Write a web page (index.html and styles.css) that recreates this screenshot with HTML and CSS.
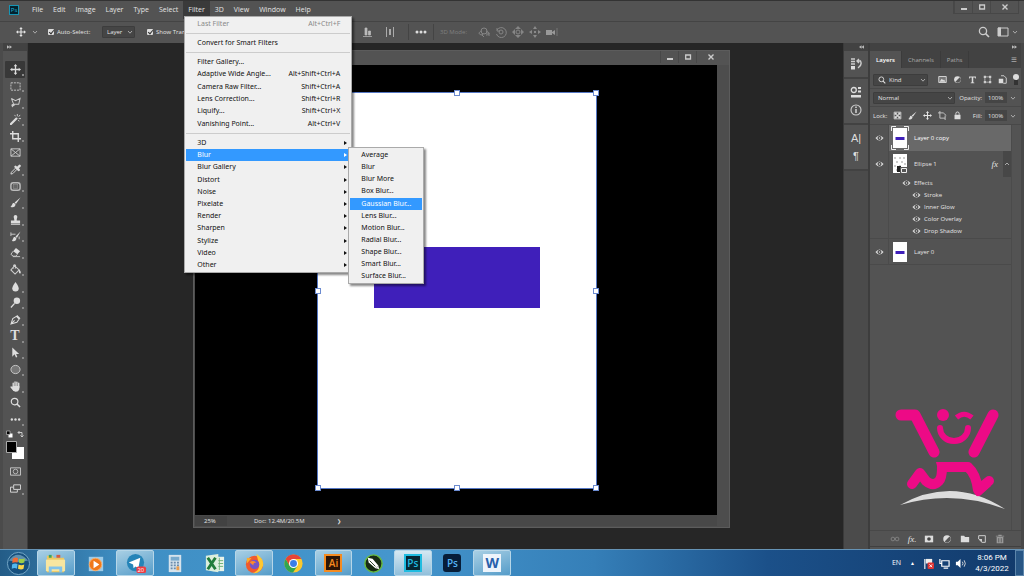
FILE: index.html
```html
<!DOCTYPE html>
<html lang="en">
<head>
<meta charset="utf-8">
<title>Photoshop</title>
<link rel="stylesheet" href="styles.css">
</head>
<body>
<svg class="defs" aria-hidden="true">
  <defs>
    <symbol id="move" viewBox="0 0 12 12"><path d="M6 0 8 2.500H6.700V5.300H9.500V4L12 6 9.500 8V6.700H6.700V9.500H8L6 12 4 9.500H5.300V6.700H2.500V8L0 6 2.500 4V5.300H5.300V2.500H4z" fill="currentColor"/></symbol>
    <symbol id="chev" viewBox="0 0 6 6"><path d="M1 2 3 4.200 5 2" fill="none" stroke="currentColor"/></symbol>
    <symbol id="eye" viewBox="0 0 10 8"><path d="M0.500 4Q5-1.800 9.500 4 5 9.800.5 4z" fill="#ddd"/><circle cx="5" cy="4" r="2.200" fill="#444"/><circle cx="5" cy="4" r=".9" fill="#ddd"/></symbol>
    <symbol id="search" viewBox="0 0 12 12"><circle cx="5" cy="5" r="3.600" fill="none" stroke="currentColor" stroke-width="1.300"/><path d="m7.600 7.600 3.400 3.400" stroke="currentColor" stroke-width="1.600"/></symbol>
    <symbol id="half" viewBox="0 0 12 12"><circle cx="6" cy="6" r="4.500" fill="currentColor"/><path d="M9 3 3.200 9A4.200 4.200 0 0 0 9 9 4.200 4.200 0 0 0 9 3z" fill="#555"/></symbol>
    <symbol id="dbl" viewBox="0 0 6 4"><path d="M0 0 3 2 0 4zM3 0 6 2 3 4z" fill="currentColor"/></symbol>
    <symbol id="dbll" viewBox="0 0 6 4"><path d="M6 0 3 2 6 4zM3 0 0 2 3 4z" fill="currentColor"/></symbol>
    <symbol id="min" viewBox="0 0 8 8"><path d="M1 5h6v2H1z" fill="currentColor"/></symbol>
    <symbol id="max" viewBox="0 0 8 8"><path d="M1.700 2h4.800v4H1.700z" fill="none" stroke="currentColor" stroke-width="1.300"/></symbol>
    <symbol id="close" viewBox="0 0 8 8"><path d="m1.500 1.500 5 5m0-5-5 5" stroke="currentColor" stroke-width="1.400"/></symbol>
  </defs>
</svg>

<header class="menubar">
  <span class="pslogo">Ps</span>
  <nav class="menus">
    <button>File</button><button>Edit</button><button>Image</button><button>Layer</button><button>Type</button><button>Select</button>
    <div class="menuhost">
      <button class="open">Filter</button>
      <div class="dropdown">
        <button class="item dim"><span>Last Filter</span><kbd>Alt+Ctrl+F</kbd></button>
        <hr>
        <button class="item"><span>Convert for Smart Filters</span></button>
        <hr>
        <div class="group six">
          <button class="item"><span>Filter Gallery...</span></button>
          <button class="item"><span>Adaptive Wide Angle...</span><kbd>Alt+Shift+Ctrl+A</kbd></button>
          <button class="item"><span>Camera Raw Filter...</span><kbd>Shift+Ctrl+A</kbd></button>
          <button class="item"><span>Lens Correction...</span><kbd>Shift+Ctrl+R</kbd></button>
          <button class="item"><span>Liquify...</span><kbd>Shift+Ctrl+X</kbd></button>
          <button class="item"><span>Vanishing Point...</span><kbd>Alt+Ctrl+V</kbd></button>
        </div>
        <hr>
        <div class="group eleven">
          <button class="item sub"><span>3D</span></button>
          <div class="subhost">
            <button class="item sub on"><span>Blur</span></button>
            <div class="submenu">
              <button class="item">Average</button>
              <button class="item">Blur</button>
              <button class="item">Blur More</button>
              <button class="item">Box Blur...</button>
              <button class="item on">Gaussian Blur...</button>
              <button class="item">Lens Blur...</button>
              <button class="item">Motion Blur...</button>
              <button class="item">Radial Blur...</button>
              <button class="item">Shape Blur...</button>
              <button class="item">Smart Blur...</button>
              <button class="item">Surface Blur...</button>
            </div>
          </div>
          <button class="item sub"><span>Blur Gallery</span></button>
          <button class="item sub"><span>Distort</span></button>
          <button class="item sub"><span>Noise</span></button>
          <button class="item sub"><span>Pixelate</span></button>
          <button class="item sub"><span>Render</span></button>
          <button class="item sub"><span>Sharpen</span></button>
          <button class="item sub"><span>Stylize</span></button>
          <button class="item sub"><span>Video</span></button>
          <button class="item sub"><span>Other</span></button>
        </div>
      </div>
    </div>
    <button>3D</button><button>View</button><button>Window</button><button>Help</button>
  </nav>
  <div class="winctl">
    <button aria-label="Minimize"><svg><use href="#min"/></svg></button><button aria-label="Maximize"><svg><use href="#max"/></svg></button><button class="wide" aria-label="Close"><svg><use href="#close"/></svg></button>
  </div>
</header>

<div class="options">
  <svg class="i10"><use href="#move"/></svg>
  <svg class="i6"><use href="#chev"/></svg>
  <label class="check auto"><input type="checkbox" checked>Auto-Select:</label>
  <span class="pick layerpick"><select aria-label="Auto-select target"><option>Layer</option></select><svg class="i6"><use href="#chev"/></svg></span>
  <label class="check trans"><input type="checkbox" checked>Show Transform Controls</label>
  <div class="align">
    <svg class="i10" viewBox="0 0 10 10"><path d="M0 9.500h9M2 1h2v7H2zM5.500 4h2v4h-2z" fill="#bbb" stroke="#bbb" stroke-width=".7"/></svg>
    <svg class="i10" viewBox="0 0 10 10"><path d="M1.500 0v10M8.500 0v10" stroke="#aaa"/><path d="M4 2h2v6H4z" fill="#aaa"/></svg>
    <i class="vline"></i>
    <svg class="i12" viewBox="0 0 12 12"><g fill="#ddd"><circle cx="2" cy="6" r="1.500"/><circle cx="6" cy="6" r="1.500"/><circle cx="10" cy="6" r="1.500"/></g></svg>
    <i class="vline"></i>
    <span class="mode">3D Mode:</span>
    <svg class="i12" viewBox="0 0 12 12" fill="none" stroke="#858585"><circle cx="6" cy="5" r="3"/><path d="M4 5C0 6 0 9 5 9M8 5c4 1 4 4 0 4M5 7l-1 2 2 2M8 7h3v3"/></svg>
    <svg class="i12" viewBox="0 0 12 12" fill="none" stroke="#858585"><circle cx="6" cy="6" r="2"/><path d="M2 2v3h3M2 4a5 5 0 1 1-.5 4"/></svg>
    <svg class="i12" viewBox="0 0 12 12"><path d="M6 0 9 3H3zM6 12 3 9h6zM0 6l3-3v6zM12 6 9 9V3z" fill="#858585"/><circle cx="6" cy="6" r="2" fill="none" stroke="#858585"/></svg>
    <svg class="i12" viewBox="0 0 12 12"><path d="M6 0 8 3H4zM6 12 4 9h4zM0 6l3-2v4zM12 6 9 8V4zM5 5h2v2H5z" fill="#8a8a8a"/></svg>
    <svg class="i12" viewBox="0 0 12 12"><path d="M0 4h6v5H0zM6 6l3-2v5L6 7z" fill="#999"/><path d="M11 2v8" stroke="#777"/></svg>
  </div>
  <div class="right">
    <button aria-label="Search"><svg class="i12"><use href="#search"/></svg></button>
    <button aria-label="Workspace"><svg class="i12" viewBox="0 0 12 12"><path d="M1 2h10v8H1z" fill="none" stroke="#ccc"/><path d="M1 1.500h3V10H1z" fill="#ccc"/></svg></button>
    <svg class="i6"><use href="#chev"/></svg>
  </div>
</div>

<main class="work">
  <aside class="tools">
    <div class="strip"><svg class="arrows"><use href="#dbl"/></svg></div>
    <div class="toollist">
      <button class="on fly" aria-label="Move"><svg><use href="#move"/></svg></button>
      <button class="fly" aria-label="Marquee"><svg viewBox="0 0 12 12"><path d="M1 2h10v8H1z" fill="none" stroke="#ccc" stroke-dasharray="2.200 1"/></svg></button>
      <button class="fly" aria-label="Lasso"><svg viewBox="0 0 12 12"><path d="M1.500 1.500 6 4l5-2.500L9.500 8H4L1.500 1.500M4 8c-3 0-2 3 0 1.500S3 7 2.500 11" fill="none" stroke="#ccc" stroke-width="1.100"/></svg></button>
      <button class="fly" aria-label="Magic wand"><svg viewBox="0 0 12 12"><path d="m1 11 6-6" stroke="#ddd" stroke-width="2.400" stroke-linecap="round"/><path d="M8 0v2.500M5 1l1 1.500M11 1 9.500 3M12 5H9.500M10 8 9 6.500" stroke="#ccc"/></svg></button>
      <button class="fly" aria-label="Crop"><svg viewBox="0 0 12 12"><path d="M3 0v8.500h9M0 3h9v9" fill="none" stroke="#ddd" stroke-width="1.500"/></svg></button>
      <button aria-label="Frame"><svg viewBox="0 0 12 12"><path d="M1 2h10v8H1zM1 2l10 8M11 2 1 10" fill="none" stroke="#ccc"/></svg></button>
      <button class="fly" aria-label="Eyedropper"><svg viewBox="0 0 12 12"><path d="m6.500 4-5 5-.5 2 2-.5 5-5" fill="none" stroke="#ddd"/><path d="m6 3 3.500 3.500M8 4.500l2.500-2.500" stroke="#ddd" stroke-width="2.600" stroke-linecap="round"/></svg></button>
      <button class="fly" aria-label="Healing patch"><svg viewBox="0 0 12 12"><rect x="1" y="2" width="10" height="8" rx="2.500" fill="none" stroke="#bbb" stroke-width="1.600"/><rect x="3.500" y="4" width="5" height="4" fill="#666" stroke="#999" stroke-width=".6"/></svg></button>
      <button class="fly" aria-label="Brush"><svg viewBox="0 0 12 12"><path d="M11.500.5 5 6l1.500 1.500zM4.500 6.500C2 6 3 9 .5 10.500 3 12 6 11 6 8z" fill="#ddd"/></svg></button>
      <button class="fly" aria-label="Stamp"><svg viewBox="0 0 12 12"><path d="M4 3a2 2 0 1 1 4 0c0 1-.7 2-.7 4H11v3H1V7h3.700C4.700 5 4 4 4 3zM1 10.700h10v1H1z" fill="#ddd"/></svg></button>
      <button class="fly" aria-label="History brush"><svg viewBox="0 0 12 12"><path d="M11.500.5 6 6l1.500 1.500zM5.500 6.500C3 6 4 9 2 10.500 4 12 7 11 7 8z" fill="#ddd"/><path d="M1 3.500h5M1 1.500v4M10 6v3" stroke="#ccc"/></svg></button>
      <button class="fly" aria-label="Eraser"><svg viewBox="0 0 12 12"><path d="m6.500 1 4.500 3.500L8 8 3.500 4.500z" fill="#ddd"/><path d="M3.500 4.500 1 8l2.500 2h3L8 8M3 10.500h8" fill="none" stroke="#ccc"/></svg></button>
      <button class="fly" aria-label="Paint bucket"><svg viewBox="0 0 12 12"><path d="m5 2 5 4.500L5.500 11 1 6.500zM4 5V1.500q1-1.500 2 0V5" fill="none" stroke="#ccc" stroke-width="1.200"/><path d="M10 6q3 3 1 4.500Q9 10 10 6" fill="#ddd"/></svg></button>
      <button class="fly" aria-label="Blur"><svg viewBox="0 0 12 12"><path d="M6 1Q9.500 5.500 9.500 8a3.500 3.500 0 0 1-7 0Q2.500 5.500 6 1" fill="#ddd"/></svg></button>
      <button class="fly" aria-label="Dodge"><svg viewBox="0 0 12 12"><circle cx="7.500" cy="4" r="3.500" fill="#ddd"/><path d="m5 7-4 4.500" stroke="#ddd" stroke-width="1.400"/></svg></button>
      <button class="fly" aria-label="Pen"><svg viewBox="0 0 12 12"><path d="M1 11 3 5l4-2.500 3 3L7.500 9zM1 11l4-4M7.500 1.500 11 5" fill="none" stroke="#ddd" stroke-width="1.100"/></svg></button>
      <button class="fly glyph" aria-label="Type">T</button>
      <button class="fly" aria-label="Path select"><svg viewBox="0 0 12 12"><path d="M2.500.5v10L5 8l1.500 3.500L8 11 6.700 7.500H10z" fill="#ddd"/></svg></button>
      <button class="fly" aria-label="Ellipse"><svg viewBox="0 0 12 12"><ellipse cx="6" cy="6" rx="5" ry="4.500" fill="#777" stroke="#ccc"/></svg></button>
      <button class="fly" aria-label="Hand"><svg viewBox="0 0 12 12"><path d="M3.500 7V2.500M5.500 6V1M7.500 6V1.200M9.500 7V2.500M1.200 6.500 4 10" stroke="#ddd" stroke-width="1.500" stroke-linecap="round"/><path d="M3 5.500h7.200V9Q9 12 6 11.700 3.500 11.500 2 8z" fill="#ddd"/></svg></button>
      <button aria-label="Zoom"><svg><use href="#search"/></svg></button>
      <button class="fly" aria-label="More tools"><svg viewBox="0 0 12 12"><g fill="#ddd"><circle cx="2" cy="6" r="1.300"/><circle cx="6" cy="6" r="1.300"/><circle cx="10" cy="6" r="1.300"/></g></svg></button>
    </div>
    <div class="swatches">
      <svg viewBox="0 0 20 30"><path d="M3.500 3.500h4v4h-4z" fill="#fff"/><path d="M1.500 1h3.500v3.500H1.500z" fill="#000" stroke="#bbb" stroke-width=".7"/><path d="M13 2.500h4V7M14.500 1 13 2.500l1.500 1.500M15.500 5.500 17 7l1.500-1.500" fill="none" stroke="#ccc"/><path d="M7 17h12v12H7z" fill="#fff"/><path d="M1.500 11.500h10v11h-10z" fill="#000" stroke="#aaa"/></svg>
    </div>
    <button aria-label="Quick mask"><svg viewBox="0 0 12 12"><path d="M.5 2h11v8H.5z" fill="none" stroke="#ccc"/><circle cx="6" cy="6" r="2.500" fill="none" stroke="#bbb"/></svg></button>
    <button class="fly" aria-label="Screen mode"><svg viewBox="0 0 12 12"><path d="M4 2h7.500v5H4z" fill="#535353" stroke="#ddd"/><path d="M3.500 4.500h-3V10H8V7.500" fill="none" stroke="#ddd"/></svg></button>
  </aside>

  <section class="desk">
    <div class="docwin">
      <div class="doctitle">
        <button aria-label="Minimize document"><svg><use href="#min"/></svg></button><button aria-label="Maximize document"><svg><use href="#max"/></svg></button><button class="wide" aria-label="Close document"><svg><use href="#close"/></svg></button>
      </div>
      <div class="docbody">
        <div class="page">
          <div class="rect"></div>
          <i class="h nw"></i><i class="h n"></i><i class="h ne"></i><i class="h w"></i><i class="h e"></i><i class="h sw"></i><i class="h s"></i><i class="h se"></i>
        </div>
      </div>
      <div class="docstatus"><span class="pct">25%</span><span class="size">Doc: 12.4M/20.5M</span><span class="gt">❯</span></div>
    </div>
  </section>

  <aside class="icons">
    <div class="strip"><svg class="arrows"><use href="#dbll"/></svg></div>
    <div class="set"><button aria-label="History"><svg viewBox="0 0 12 12"><path d="M1 1h4M1 3.500h4M1 6h4" stroke="#ccc" stroke-width="1.300"/><path d="M1 8h4v3.500H1z" fill="#ddd"/><path d="M7.500 3h3q2 4-2.500 7M9 1 7 3l2 2" fill="none" stroke="#ccc" stroke-width="1.400"/></svg></button></div>
    <div class="set"><button aria-label="Properties"><svg viewBox="0 0 12 12"><path d="M1 9h10v2.500H1zM8 1h3v2H8zM8 4.500h3v2H8z" fill="#ddd"/><circle cx="3.800" cy="4" r="2.500" fill="none" stroke="#ddd" stroke-width="1.300"/></svg></button><button aria-label="Info"><svg viewBox="0 0 12 12"><circle cx="6" cy="6" r="5" fill="none" stroke="#ccc" stroke-width="1.100"/><path d="M6 2.500V4M6 5v4" stroke="#ddd" stroke-width="1.400"/></svg></button></div>
    <div class="set"><button class="glyph2" aria-label="Character">A|</button><button class="glyph2" aria-label="Paragraph">¶</button></div>
  </aside>

  <aside class="panel">
    <div class="strip"><svg class="arrows"><use href="#dbl"/></svg></div>
    <div class="tabs"><button class="on">Layers</button><button>Channels</button><button>Paths</button><span class="burger">≡</span></div>
    <div class="prow">
      <span class="pick kind"><svg class="i8"><use href="#search"/></svg><select aria-label="Filter kind"><option>Kind</option></select><svg class="i6"><use href="#chev"/></svg></span>
      <div class="filters">
        <svg viewBox="0 0 12 12"><path d="M1 2h10v8H1z" fill="#777" stroke="#ddd" stroke-width="1.200"/><path d="m2 9 3-4 2 2 1-1 2 3z" fill="#ddd"/></svg>
        <svg><use href="#half"/></svg>
        <svg viewBox="0 0 12 12"><path d="M1.500 2h9v2.500H9.700L9 3.200H7V9.500l1.500.7v.8h-5v-.8L5 9.500V3.200H3L2.300 4.500h-.8z" fill="#ddd"/></svg>
        <svg viewBox="0 0 12 12"><path d="M2.500 2.500h7v7h-7z" fill="none" stroke="#ccc"/><path d="M1 1h3v3H1zM8 1h3v3H8zM1 8h3v3H1zM8 8h3v3H8z" fill="#ccc"/></svg>
        <svg viewBox="0 0 12 12"><path d="M4 1h4l3 3v7H7" fill="none" stroke="#ccc" stroke-width="1.300"/><path d="M1 5h6v6H1z" fill="#ddd"/></svg>
        <svg class="toggle" viewBox="0 0 6 12"><rect x="1" y="3" width="4" height="8" fill="#333"/><circle cx="3" cy="3" r="3" fill="#ddd"/></svg>
      </div>
    </div>
    <div class="prow">
      <span class="pick blend"><select aria-label="Blend mode"><option>Normal</option></select><svg class="i6"><use href="#chev"/></svg></span>
      <label class="num">Opacity: <input value="100%"><svg class="i6"><use href="#chev"/></svg></label>
    </div>
    <div class="prow">
      <div class="locks"><span>Lock:</span>
        <svg viewBox="0 0 12 12"><path d="M1.500 1.500h9v9h-9z" fill="none" stroke="#ddd"/><path d="M2 2h3v3H2zM7 2h3v3H7zM4.500 4.500h3v3h-3zM2 7h3v3H2zM7 7h3v3H7z" fill="#ddd"/></svg>
        <svg viewBox="0 0 12 12"><path d="M11.500.5 5 6l1.500 1.500zM4.500 6.500C2 6 3 9 .5 10.500 3 12 6 11 6 8z" fill="#ddd"/></svg>
        <svg><use href="#move"/></svg>
        <svg viewBox="0 0 12 12"><path d="M2.500 0v9.500h7V6M0 2.500h7L11 6M9.500 9.500V12" fill="none" stroke="#ccc" stroke-width="1.200"/></svg>
        <svg viewBox="0 0 12 12"><path d="M2 5h8v6H2z" fill="#ddd"/><path d="M3.800 5V3.500a2.200 2.200 0 0 1 4.400 0V5" fill="none" stroke="#ddd" stroke-width="1.300"/></svg>
      </div>
      <label class="num">Fill: <input value="100%"><svg class="i6"><use href="#chev"/></svg></label>
    </div>
    <div class="layers">
      <div class="layer"><button class="eye" aria-label="Toggle layer"><svg><use href="#eye"/></svg></button><div class="info sel"><svg class="thumb" viewBox="0 0 18 24"><path d="M2 2h14v20H2z" fill="#fff"/><path d="M4.500 11h9v3h-9z" fill="#3f1fba"/><path d="M.5 5V.5H5M13 .5h4.500V5M17.500 19v4.500H13M5 23.500H.5V19" fill="none" stroke="#eee"/></svg><span>Layer 0 copy</span></div></div>
      <div class="layer"><button class="eye" aria-label="Toggle layer"><svg><use href="#eye"/></svg></button><div class="info"><svg class="thumb" viewBox="0 0 18 24"><path d="M2 2h14v19H2z" fill="#fff"/><path d="M3 5h2v2H3zM8 5h2v2H8zM12 5h2v2h-2zM5 9h2v2H5zM10 9h2v2h-2zM3 13h2v2H3zM8 13h2v2H8zM5 17h2v2H5zM13 11h2v2h-2z" fill="#ccc"/><path d="M6 14h4v6H6z" fill="#222"/><path d="M9 15h8v7H9z" fill="#555"/><path d="M10.500 16.500h5v4h-5z" fill="none" stroke="#eee"/></svg><span>Ellipse 1</span><em class="fx">fx</em><span class="up"><svg viewBox="0 0 6 6"><path d="M1 4 3 2l2 2" fill="none" stroke="#aaa"/></svg></span></div></div>
      <div class="effects">
        <div class="eff first"><svg><use href="#eye"/></svg>Effects</div>
        <div class="eff"><svg><use href="#eye"/></svg>Stroke</div>
        <div class="eff"><svg><use href="#eye"/></svg>Inner Glow</div>
        <div class="eff"><svg><use href="#eye"/></svg>Color Overlay</div>
        <div class="eff"><svg><use href="#eye"/></svg>Drop Shadow</div>
      </div>
      <div class="layer line"><button class="eye" aria-label="Toggle layer"><svg><use href="#eye"/></svg></button><div class="info"><svg class="thumb" viewBox="0 0 18 24"><path d="M2 2h14v20H2z" fill="#fff"/><path d="M4.500 11h9v3h-9z" fill="#3f1fba"/></svg><span>Layer 0</span></div></div>
    </div>
    <div class="pfoot">
      <svg viewBox="0 0 12 12" fill="none" stroke="#888"><circle cx="3.500" cy="6" r="2.200"/><circle cx="8.500" cy="6" r="2.200"/></svg>
      <em class="fx">fx.</em>
      <svg viewBox="0 0 12 12"><path d="M1 2h10v8H1z" fill="#ddd"/><circle cx="6" cy="6" r="2.200" fill="#444"/></svg>
      <svg><use href="#half"/></svg>
      <svg viewBox="0 0 12 12"><path d="M1 2h4l1 1.500h5V10H1z" fill="#ddd"/></svg>
      <svg viewBox="0 0 12 12"><path d="M2 2h8v8H6L2 6z" fill="none" stroke="#ccc" stroke-width="1.200"/><path d="M2 6h4v4z" fill="#ccc"/></svg>
      <svg viewBox="0 0 12 12"><path d="M2 3.500h8V11H2zM1 2h10v1H1zM4 .800h4V2H4z" fill="#999"/><path d="M4.500 5v5M7.500 5v5" stroke="#555"/></svg>
    </div>
  </aside>

  <svg class="brand" viewBox="0 0 112 104" role="img" aria-label="Shopping cart mascot">
    <path d="M5 97Q58 67 110 101 58 81 5 97" fill="#ddd"/>
    <g fill="none" stroke="#ed0a86" stroke-linecap="round" stroke-linejoin="round">
      <path d="M6 7H20L39 44" stroke-width="11"/>
      <path d="M98 7 79 44" stroke-width="11"/>
      <path d="M45 20a14 13 0 0 0 28 0" stroke-width="6"/>
      <path d="M61.500 9.500Q69 3 77 9.500" stroke-width="5" stroke-linecap="butt"/>
      <path d="M17 76 25 65 31 73Q38 79 44 73 47 70 47 59H73Q81 66 83 82L94 73" stroke-width="10"/>
    </g>
    <circle cx="48" cy="7" r="6" fill="#ed0a86"/>
    <path d="M41 54h10v8h-8zM78 78l2 8q2 4 6 1l10-9z" fill="#ed0a86"/>
  </svg>
</main>

<footer class="taskbar">
  <button class="start" aria-label="Start"><svg viewBox="0 0 26 26"><circle cx="13" cy="13" r="11.500" fill="#16507e" stroke="#77a9c8"/><path d="M3 10Q12-2 23 10 13 13 3 10" fill="#8fb9cf" opacity=".6"/><path d="M7 8q3-2 5.500-.5L12 12Q9 11 6.500 12.500z" fill="#f26b35"/><path d="M13.500 8Q17 9 19.500 7.500L19 12q-3 1.500-5.700 0z" fill="#9bce47"/><path d="M6.300 14Q9 12.500 12 13.500l-.6 5Q9 17 6 18.500z" fill="#53b7ee"/><path d="M13 14q3 1.500 6 0l-.8 4.500Q16 20 12.500 18.500z" fill="#fbd64b"/></svg></button>
  <div class="apps">
    <button class="lit" aria-label="Explorer"><svg viewBox="0 0 24 24"><path d="M3 4h6l1 2h11v15H3z" fill="#eec861"/><path d="M5 3h3v3H5z" fill="#3fa45d"/><path d="M13 3h4v3h-4z" fill="#d65b41"/><path d="M2 8h20v12H2z" fill="#f8e6a0"/><path d="M5 15h14v6h-3v-3H8v3H5z" fill="#82c3ea"/></svg></button>
    <button aria-label="Media player"><svg viewBox="0 0 24 24"><path d="M5 5h15v15H5z" fill="#9ccbe8"/><circle cx="12" cy="13" r="6.500" fill="#f07818" stroke="#f9ac68"/><path d="m10 9 6 4-6 4z" fill="#fff"/></svg></button>
    <button class="lit" aria-label="Telegram"><svg viewBox="0 0 24 24"><circle cx="12" cy="11" r="9" fill="#2484b8"/><path d="m5 11 12-5-2 11-3-2-2 2-.5-4z" fill="#fff"/><rect x="13" y="15" width="10" height="7" rx="2" fill="#ee3c43"/><text x="14" y="21" class="badge">20</text></svg></button>
    <button aria-label="Calculator"><svg viewBox="0 0 24 24"><path d="M6 3h13v18H6z" fill="#d6e3ec"/><path d="M8 5h9v4H8z" fill="#78aacd"/><path d="M8 11h9M8 14h9M8 17h9" stroke="#6a8cac" stroke-width="1.800" stroke-dasharray="2 1.300"/><path d="M14 15h3v4h-3z" fill="#eb9d4d"/></svg></button>
    <button aria-label="Excel"><svg viewBox="0 0 24 24"><path d="M10 5h12v15H10z" fill="#e9f3e9"/><path d="M12 9h9M12 12h9M12 15h9M17 6v13" stroke="#6db277"/><path d="m3 4 13-2v19L3 19z" fill="#dceedd"/><path d="m5 6 8 12M13 6 5 18" stroke="#217c3b" stroke-width="3"/></svg></button>
    <button class="lit" aria-label="Firefox"><svg viewBox="0 0 24 24"><circle cx="12" cy="13" r="9" fill="#f2592c"/><path d="M14 2q8 5 7 12-3 9-11 8 9-3 6-12Z" fill="#ffc831"/><path d="M4 6q3 1 5 0-3 4-5 6z" fill="#ffad28"/><circle cx="12" cy="13" r="5" fill="#7554c6"/><path d="M7 11q3-3 7 0-4 0-3 3z" fill="#ff8a29"/></svg></button>
    <button aria-label="Chrome"><svg viewBox="0 0 24 24"><circle cx="12" cy="12" r="9.500" fill="#fbc92d"/><path d="M3.800 7.200A9.500 9.500 0 0 1 20.200 7.200H12L8 14.500z" fill="#e64437"/><path d="M3.800 7.200A9.500 9.500 0 0 0 11.500 21.500L16 14.500l-8 0z" fill="#31a650"/><circle cx="12" cy="12" r="4.700" fill="#fff"/><circle cx="12" cy="12" r="3.600" fill="#397ee8"/></svg></button>
    <button class="lit" aria-label="Illustrator"><span class="app ai">Ai</span></button>
    <button aria-label="CorelDRAW"><svg viewBox="0 0 24 24"><circle cx="12" cy="12" r="9" fill="#182b16" stroke="#69bd3d" stroke-width="1.500"/><path d="m6 6 5 1 6 7-3 3-7-6z" fill="#fff"/><path d="m8 9 6 6" stroke="#263b22"/><path d="m17 14 1 4-4-1z" fill="#eee"/></svg></button>
    <button class="lit hot" aria-label="Photoshop"><span class="app ps">Ps</span></button>
    <button aria-label="Photoshop 2021"><span class="app ps2">Ps</span></button>
    <button class="lit" aria-label="Word"><span class="app word">W</span></button>
  </div>
  <div class="tray">
    <span class="lang">EN</span><span class="tri">▲</span>
    <svg viewBox="0 0 12 12"><path d="M2 1v11" stroke="#fff" stroke-width="1.200"/><path d="M3 1h7v5H3z" fill="#eee"/><rect x="5" y="5" width="7" height="7" rx="1" fill="#d33"/><path d="m7 7 3 3m0-3-3 3" stroke="#fff"/></svg>
    <svg viewBox="0 0 12 12"><path d="M3 3h8v6H3zM5 11h5M1 1v5h2" fill="none" stroke="#fff" stroke-width="1.300"/></svg>
    <svg viewBox="0 0 12 12"><path d="M1 4h2l3-3v10L3 8H1z" fill="#fff"/><path d="M8 4q1.500 2 0 4M10 2.500q2.500 3.500 0 7" fill="none" stroke="#ddd"/></svg>
    <div class="clock">8:06 PM<br>4/3/2022</div>
    <button class="peek" aria-label="Show desktop"></button>
  </div>
</footer>
</body>
</html>
```
FILE: styles.css
```css
* { box-sizing: border-box; }
body { margin: 0; height: 100vh; display: flex; flex-direction: column; overflow: hidden; background: #262626; color: #e4e4e4; font: 7px/10px "Open Sans", "Noto Sans", sans-serif; }
button, input, select { margin: 0; padding: 0; border: 0; background: none; color: inherit; font: inherit; }
svg { display: block; flex: none; }
.defs { position: absolute; width: 0; height: 0; }
.i6 { width: 6px; height: 6px; color: #aaa; }
.i8 { width: 8px; height: 8px; }
.i10 { width: 10px; height: 10px; }
.i12 { width: 12px; height: 12px; }

.menubar { height: 21px; flex: none; display: flex; align-items: center; background: #535353; border-top: 1px solid #333; padding: 0 5px 2px 9px; }
.pslogo { width: 10px; height: 10px; border: 1px solid #1795b5; background: #04222d; color: #22b5dc; font-size: 6px; line-height: 8px; text-align: center; }
.menus { display: flex; margin-left: 8px; height: 100%; }
.menus > button, .menuhost > button { padding: 0 5px; }
.menuhost { position: relative; display: flex; }
.menuhost > .open { background: #3a3a3a; padding: 0 5px; }
.dropdown { position: absolute; z-index: 5; top: 15px; left: 1px; width: 168px; padding: 1px; border: 1px solid #aaa; background: #f0f0f0; color: #111; box-shadow: 2px 2px 2px #0007; font-family: "Noto Sans", sans-serif; }
.dropdown hr { margin: 3px 0; border: 0; border-top: 1px solid #ccc; }
.item { display: flex; align-items: center; justify-content: space-between; width: 100%; height: 12px; padding: 0 10px 0 11px; line-height: 12px; text-align: left; white-space: nowrap; }
.item kbd { font: inherit; }
.dim { color: #888; }
.on.item { background: #3399ff; color: #fff; }
.group { display: grid; grid-auto-rows: 1fr; }
.group .item { height: 100%; }
.six { height: 74px; }
.eleven { height: 134px; }
.sub { padding-right: 3px; }
.sub::after { content: ""; border: 2px solid transparent; border-left: 3px solid #111; border-right: 0; }
.sub.on::after { border-left-color: #fff; }
.subhost { position: relative; }
.submenu { position: absolute; z-index: 6; left: 162px; top: -2px; width: 76px; height: 137px; padding: 1px; display: grid; grid-auto-rows: 1fr; background: #f0f0f0; border: 1px solid #aaa; box-shadow: 2px 2px 2px #0007; }
.winctl { margin-left: auto; align-self: flex-start; display: flex; border: 1px solid #474747; border-top: 0; }
.winctl button, .doctitle button { width: 18px; height: 12px; display: grid; place-items: center; border-left: 1px solid #484848; color: #ccc; }
.winctl svg, .doctitle svg { width: 8px; height: 8px; }
.winctl .wide, .doctitle .wide { width: 28px; }

.options { height: 22px; flex: none; display: flex; align-items: center; background: #535353; border-top: 1px solid #444; padding: 0 6px 2px 16px; font-size: 6px; }
.options > .i6 { margin: 0 10px 0 6px; }
.check { display: flex; align-items: center; gap: 3px; white-space: nowrap; }
.check input { appearance: none; width: 6px; height: 6px; border-radius: 1px; background: #ddd; display: grid; place-items: center; }
.check input::after { content: ""; width: 2px; height: 4px; border: solid #333; border-width: 0 1px 1px 0; rotate: 40deg; }
.auto { width: 54px; }
.pick { display: flex; align-items: center; background: #454545; border: 1px solid #3d3d3d; border-radius: 1px; height: 12px; padding: 0 1px 0 4px; }
.pick select { appearance: none; flex: 1; min-width: 0; }
.layerpick { width: 33px; }
.trans { margin-left: 12px; width: 216px; overflow: hidden; }
.align { display: flex; align-items: center; gap: 5px; }
.align > .i10 { margin-right: 7px; }
.vline { width: 1px; height: 16px; background: #444; margin: 0 1px; }
.mode { color: #808080; width: 33px; white-space: nowrap; }
.right { margin-left: auto; display: flex; align-items: center; gap: 7px; }
.right button { color: #ccc; }
.right .i6 { margin-left: -4px; }

.work { flex: 1; min-height: 0; display: flex; position: relative; padding-right: 3px; background: #484848; }
.strip { height: 8px; flex: none; background: #424242; display: flex; align-items: center; justify-content: flex-end; padding: 0 4px; }
.arrows { width: 5px; height: 4px; color: #bbb; }
.tools { width: 28px; flex: none; background: #535353; border-left: 3px solid #4b4b4b; border-right: 1px solid #3d3d3d; display: flex; flex-direction: column; align-items: center; }
.tools .strip { width: 100%; justify-content: flex-start; }
.toollist { margin-top: 10px; height: 367px; width: 20px; display: grid; grid-auto-rows: 1fr; }
.tools button { position: relative; width: 20px; display: grid; place-items: center; border-radius: 1px; color: #ddd; }
.tools button.on { background: #383838; }
.tools button svg { width: 11px; height: 11px; }
.tools > button { height: 17px; }
.fly::after { content: ""; position: absolute; right: 1px; bottom: 2px; width: 2px; height: 2px; background: #8a8a8a; }
.tools .glyph { font: bold 14px/14px "Liberation Serif", serif; }
.swatches { width: 20px; margin: 2px 0 3px; }
.swatches svg { width: 20px; height: 30px; }

.desk { position: relative; flex: 1; background: #262626; }
.docwin { position: absolute; left: 165px; top: 7px; right: 113px; bottom: 21px; display: flex; flex-direction: column; background: #4d4d4d; border: 1px solid #5c5c5c; padding: 0 12px 1px 1px; }
.doctitle { height: 14px; flex: none; margin-right: -12px; display: flex; justify-content: flex-end; padding-right: 5px; background: #535353; }
.docbody { flex: 1; background: #000; position: relative; }
.page { position: absolute; left: 122px; top: 27px; right: 120px; bottom: 26px; background: #fff; border: 1px solid #5577c4; }
.rect { position: absolute; left: 20%; top: 39%; width: 60%; height: 61px; background: #3f1fba; }
.h { position: absolute; width: 6px; height: 6px; background: #fff; border: 1px solid #6c8bd0; transform: translate(-50%, -50%); }
.nw { left: 0; top: 0; } .n { left: 50%; top: 0; } .ne { left: 100%; top: 0; }
.w { left: 0; top: 50%; } .e { left: 100%; top: 50%; }
.sw { left: 0; top: 100%; } .s { left: 50%; top: 100%; } .se { left: 100%; top: 100%; }
.docstatus { height: 11px; flex: none; display: flex; align-items: center; font-size: 6px; background: #484848; }
.pct { width: 32px; padding-left: 9px; background: #424242; }
.size { width: 110px; padding-left: 27px; }
.gt { font-size: 5px; }

.icons { width: 27px; flex: none; background: #4b4b4b; border-left: 1px solid #3a3a3a; border-right: 2px solid #3d3d3d; }
.set { display: flex; flex-direction: column; gap: 6px; padding: 7px 0; align-items: center; background: #535353; border-bottom: 2px solid #424242; }
.set button { display: grid; place-items: center; width: 16px; height: 12px; color: #ddd; }
.set svg { width: 12px; height: 12px; }
.set .glyph2 { font: 11px/12px "Liberation Sans", sans-serif; }
.panel { width: 151px; flex: none; display: flex; flex-direction: column; background: #535353; font-size: 6px; }
.tabs { height: 17px; flex: none; display: flex; background: #424242; color: #aaa; }
.tabs button { padding: 0 6px; border-right: 1px solid #3b3b3b; }
.tabs .on { background: #535353; color: #fff; font-weight: 600; }
.burger { margin: 3px 4px 0 auto; font-size: 10px; }
.prow { height: 18px; flex: none; display: flex; align-items: center; justify-content: space-between; padding: 0 5px 0 3px; border-bottom: 1px solid #484848; }
.tabs + .prow { height: 21px; padding-right: 2px; padding-top: 3px; }
.kind { width: 55px; gap: 3px; }
.filters, .locks { display: flex; align-items: center; }
.filters { gap: 6px; }
.filters svg { width: 9px; height: 9px; color: #ddd; }
.filters .toggle { width: 6px; height: 12px; }
.blend { width: 82px; }
.num { display: flex; align-items: center; gap: 3px; }
.num input { width: 22px; height: 11px; padding: 0 3px; background: #454545; }
.locks { gap: 6px; }
.locks svg { width: 9px; height: 9px; }
.layers { flex: 1; min-height: 0; margin-right: 9px; border-right: 1px solid #4b4b4b; }
.layer { display: flex; height: 26px; }
.eye { width: 19px; display: grid; place-items: center; border-right: 1px solid #4b4b4b; }
.eye svg, .eff svg { width: 9px; height: 8px; }
.info { flex: 1; display: flex; align-items: center; gap: 5px; padding-left: 2px; }
.sel { background: #696969; color: #fff; }
.thumb { width: 18px; height: 24px; }
.fx { font: italic 9px/10px "Liberation Serif", serif; }
.info .fx { margin-left: auto; }
.up { width: 8px; background: #474747; align-self: stretch; display: grid; place-items: center; }
.up svg { width: 6px; height: 6px; }
.effects { padding-bottom: 1px; margin-left: 18px; border-left: 1px solid #4b4b4b; }
.eff { display: flex; align-items: center; gap: 3px; height: 12px; padding-left: 23px; }
.eff.first { padding-left: 13px; }
.line { border-top: 1px solid #4a4a4a; border-bottom: 1px solid #4a4a4a; height: 27px; }
.pfoot { height: 17px; flex: none; display: flex; align-items: center; justify-content: space-between; padding: 0 16px 0 20px; margin-bottom: 2px; border-top: 1px solid #484848; border-bottom: 1px solid #404040; }
.pfoot svg { width: 10px; height: 10px; color: #ddd; }
.brand { position: absolute; right: 17px; bottom: 37px; width: 112px; height: 104px; }

.taskbar { height: 27px; flex: none; display: flex; align-items: center; border-top: 1px solid #6693b5; background: linear-gradient(90deg, #235c87, #3f8fc4 12%, #4596cd 38%, #357fb8 58%, #1b5089 75%, #123a6b); }
.start { width: 36px; height: 26px; display: grid; place-items: center; }
.start svg { width: 25px; height: 25px; }
.apps { width: 476px; height: 100%; display: grid; grid-auto-flow: column; grid-auto-columns: 1fr; }
.apps button { display: grid; place-items: center; margin: 0 1px; }
.apps svg { width: 23px; height: 23px; }
.apps .lit { border: 1px solid #b6d6e8; border-radius: 2px; background: linear-gradient(160deg, #a8cfe4, #559cc9); }
.apps .hot { background: linear-gradient(#d5e8f2, #91bfdb); }
.badge { font: 6px "Open Sans", sans-serif; fill: #fff; }
.app { width: 18px; height: 18px; font: 600 10px/14px "Open Sans", sans-serif; text-align: center; border: 2px solid; }
.ai { color: #f58b20; background: #2c1405; }
.ps { color: #20bce0; background: #062734; }
.ps2 { color: #55b3f5; background: #071d38; border-color: #071d38; border-radius: 3px; }
.word { color: #2860ab; background: #eef4fb; border: 0; font-weight: 700; font-size: 14px; line-height: 18px; }
.tray { margin-left: auto; display: flex; align-items: center; gap: 5px; color: #fff; height: 100%; }
.tray svg { width: 11px; height: 11px; }
.lang { margin-right: 4px; }
.tri { font-size: 5px; margin-right: 3px; }
.clock { width: 36px; margin-left: 3px; text-align: center; font: 8px/11px Roboto, sans-serif; }
.peek { width: 9px; height: 100%; border: 1px solid #5d86ab; background: #285685; }
```
